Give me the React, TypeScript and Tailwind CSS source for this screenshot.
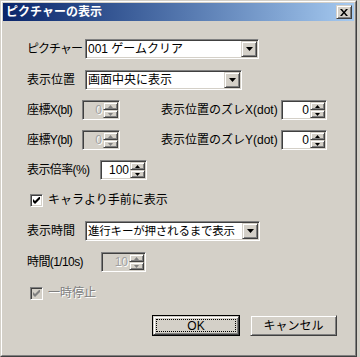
import type { ReactNode } from "react";

const sunken =
  "border border-t-[#808080] border-l-[#808080] border-b-white border-r-white shadow-[inset_1px_1px_0_#404040,inset_-1px_-1px_0_#d4d0c8]";
const raised =
  "border border-t-[#d4d0c8] border-l-[#d4d0c8] border-b-[#404040] border-r-[#404040] shadow-[inset_1px_1px_0_#ffffff,inset_-1px_-1px_0_#808080]";

function Combo({ value, width, small }: { value: string; width: string; small?: boolean }) {
  return (
    <div className={`${sunken} ${width} h-[20px] bg-white flex items-center`}>
      <span className={`flex-1 pl-[2px] ${small ? "text-[11.5px] tracking-[-0.2px]" : "text-[12px]"} leading-[14px] text-black whitespace-nowrap`}>{value}</span>
      <div className={`${raised} w-[16px] h-[16px] mr-[1px] bg-[#d4d0c8] flex items-center justify-center`}>
        <svg width="7" height="4" viewBox="0 0 7 4">
          <path d="M0 0h7L3.5 4z" fill="#000" />
        </svg>
      </div>
    </div>
  );
}

function Spin({ value, width, disabled }: { value: string; width: string; disabled?: boolean }) {
  const arrow = disabled ? "#808080" : "#000";
  return (
    <div className={`${sunken} ${width} h-[20px] flex items-center ${disabled ? "bg-[#d4d0c8]" : "bg-white"}`}>
      <span className={`flex-1 text-right pr-[1px] text-[12px] leading-[14px] ${disabled ? "text-[#a0a0a0] [text-shadow:1px_1px_0_#fff]" : "text-black"}`}>{value}</span>
      <div className="flex flex-col w-[15px] h-[16px] mr-[1px]">
        <div className={`${raised} h-[8px] bg-[#d4d0c8] flex items-center justify-center`}>
          <svg width="5" height="3" viewBox="0 0 5 3"><path d="M2.5 0L5 3H0z" fill={arrow} /></svg>
        </div>
        <div className={`${raised} h-[8px] bg-[#d4d0c8] flex items-center justify-center`}>
          <svg width="5" height="3" viewBox="0 0 5 3"><path d="M0 0h5L2.5 3z" fill={arrow} /></svg>
        </div>
      </div>
    </div>
  );
}

function Check({ label, disabled }: { label: string; disabled?: boolean }) {
  return (
    <div className="flex items-center h-[20px] pl-[3px]">
      <div className={`${sunken} w-[13px] h-[13px] flex items-center justify-center ${disabled ? "bg-[#d4d0c8]" : "bg-white"}`}>
        <svg width="7" height="7" viewBox="0 0 7 7">
          <path d="M0 2v3l2 2l5-5V-1L2 4z" fill={disabled ? "#808080" : "#000"} />
        </svg>
      </div>
      <span className={`ml-[5px] text-[12px] leading-[14px] ${disabled ? "text-[#808080] [text-shadow:1px_1px_0_#fff]" : "text-black"}`}>{label}</span>
    </div>
  );
}

function Row({ children, top }: { children: ReactNode; top: string }) {
  return <div className={`flex items-center h-[20px] ${top}`}>{children}</div>;
}

function Label({ children, width, tight }: { children: ReactNode; width: string; tight?: string }) {
  return (
    <span className={`${width} shrink-0 text-[12px] ${tight ?? ""} leading-[14px] text-black whitespace-nowrap`}>
      {children}
    </span>
  );
}

export default function App() {
  return (
    <div className="w-[360px] h-[357px] bg-[#d4d0c8] font-['Liberation_Sans','Noto_Sans_CJK_JP',sans-serif]">
      <div className="w-[357px] h-[357px] border border-t-[#d4d0c8] border-l-[#d4d0c8] border-b-[#404040] border-r-[#404040]">
        <div className="h-full border border-t-white border-l-white border-b-[#808080] border-r-[#808080] p-[1px] flex flex-col">
          <div className="h-[18px] flex items-center justify-between bg-gradient-to-r from-[#0a246a] to-[#a6caf0] pl-[3px] pr-[2px]">
            <span className="text-[12px] font-bold text-white leading-[14px]">ピクチャーの表示</span>
            <div className={`${raised} w-[16px] h-[14px] bg-[#d4d0c8] flex items-center justify-center`}>
              <svg width="8" height="7" viewBox="0 0 8 7">
                <path d="M0 0h2l2 2.5L6 0h2L5 3.5L8 7H6L4 4.5L2 7H0l3-3.5z" fill="#000" />
              </svg>
            </div>
          </div>

          <div className="flex flex-col pl-[24px]">
            <Row top="mt-[18px]">
              <Label width="w-[58px]" tight="tracking-[-1px]">ピクチャー</Label>
              <Combo value="001 ゲームクリア" width="w-[174px]" />
            </Row>
            <Row top="mt-[11px]">
              <Label width="w-[58px]">表示位置</Label>
              <Combo value="画面中央に表示" width="w-[157px]" />
            </Row>
            <Row top="mt-[10px]">
              <Label width="w-[55px]" tight="tracking-[-0.6px]">座標X(bl)</Label>
              <Spin value="0" width="w-[38px]" disabled />
              <span className="w-[41px]" />
              <Label width="w-[120px]">表示位置のズレX(dot)</Label>
              <Spin value="0" width="w-[46px]" />
            </Row>
            <Row top="mt-[10px]">
              <Label width="w-[55px]" tight="tracking-[-0.6px]">座標Y(bl)</Label>
              <Spin value="0" width="w-[38px]" disabled />
              <span className="w-[41px]" />
              <Label width="w-[120px]">表示位置のズレY(dot)</Label>
              <Spin value="0" width="w-[46px]" />
            </Row>
            <Row top="mt-[10px]">
              <Label width="w-[73px]" tight="tracking-[-0.6px]">表示倍率(%)</Label>
              <Spin value="100" width="w-[47px]" />
            </Row>
            <div className="mt-[10px]">
              <Check label="キャラより手前に表示" />
            </div>
            <Row top="mt-[11px]">
              <Label width="w-[58px]">表示時間</Label>
              <Combo value="進行キーが押されるまで表示" width="w-[175px]" small />
            </Row>
            <Row top="mt-[11px]">
              <Label width="w-[74px]" tight="tracking-[-0.6px]">時間(1/10s)</Label>
              <Spin value="10" width="w-[45px]" disabled />
            </Row>
            <div className="mt-[11px]">
              <Check label="一時停止" disabled />
            </div>
            <div className="flex mt-[12px] pl-[125px] gap-[10px]">
              <div className="w-[88px] h-[21px] border border-black">
                <div className={`${raised} h-full bg-[#d4d0c8] p-[2px]`}>
                  <div className="h-full border border-dotted border-black flex items-center justify-center text-[12px] leading-[14px] text-black">OK</div>
                </div>
              </div>
              <div className={`${raised} w-[87px] h-[21px] bg-[#d4d0c8] flex items-center justify-center text-[12px] leading-[14px] text-black`}>
                キャンセル
              </div>
            </div>
          </div>
        </div>
      </div>
    </div>
  );
}
